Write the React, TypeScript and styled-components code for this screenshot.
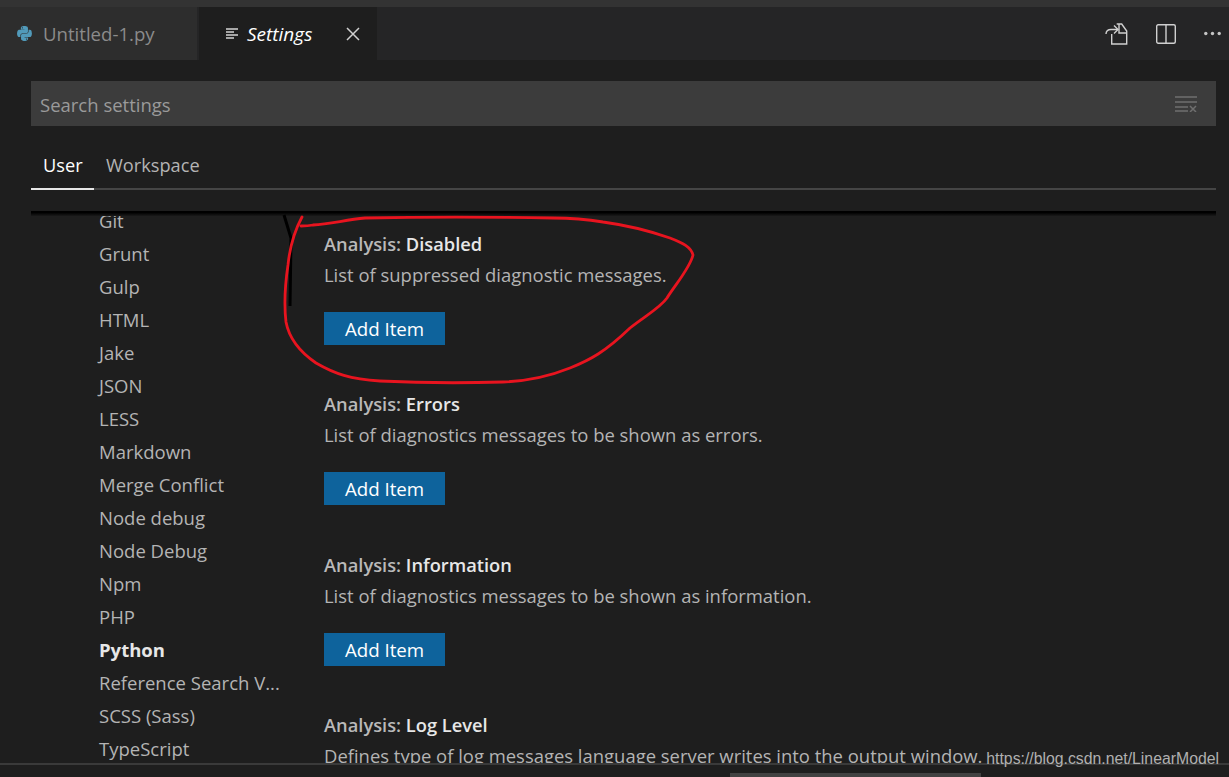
import styled, { createGlobalStyle } from "styled-components"
import { FaPython } from "react-icons/fa"

const Global = createGlobalStyle`
  html, body { margin: 0; padding: 0; background: #1e1e1e; }
  body { font-family: "Open Sans", "Noto Sans", sans-serif; }
`

const Window = styled.div`
  position: relative;
  width: 1229px;
  height: 777px;
  overflow: hidden;
  display: flex;
  flex-direction: column;
  background: #1e1e1e;
`
const TitleStrip = styled.div`
  height: 7px;
  background: #333333;
`
const TabBar = styled.div`
  height: 53px;
  display: flex;
  background: #252526;
`
const FileTab = styled.div<{ $active?: boolean }>`
  display: flex;
  align-items: center;
  height: 100%;
  background: ${(p) => (p.$active ? "#1e1e1e" : "#2d2d2d")};
  width: ${(p) => (p.$active ? "178px" : "197px")};
  margin-right: ${(p) => (p.$active ? "0" : "2px")};
  padding-left: ${(p) => (p.$active ? "26px" : "16px")};
  box-sizing: border-box;
  flex: none;
`
const TabLabel = styled.span<{ $active?: boolean }>`
  font-size: ${(p) => (p.$active ? "19px" : "18.6px")};
  margin-left: ${(p) => (p.$active ? "8px" : "10px")};
  color: ${(p) => (p.$active ? "#ffffff" : "#8b8b8b")};
  font-style: ${(p) => (p.$active ? "italic" : "normal")};
  width: ${(p) => (p.$active ? "99px" : "auto")};
`
const Actions = styled.div`
  margin-left: auto;
  display: flex;
  align-items: center;
  gap: 28px;
  padding: 0 8px 0 0;
`
const Search = styled.div`
  margin: 21px 13px 0 31px;
  height: 45px;
  display: flex;
  align-items: center;
  justify-content: space-between;
  padding: 0 18px 0 9px;
  background: #3c3c3c;
  color: #9a9a9a;
  font-size: 18.5px;
`
const SearchText = styled.span`
  position: relative;
  top: 1px;
`
const Tabs = styled.div`
  margin: 19px 13px 0 31px;
  height: 43px;
  display: flex;
  border-bottom: 2px solid #454545;
`
const ScopeTab = styled.div<{ $active?: boolean }>`
  padding: 0 11.5px 0 12px;
  height: 45px;
  box-sizing: border-box;
  line-height: 40px;
  font-size: 18.2px;
  color: ${(p) => (p.$active ? "#ffffff" : "#b4b4b4")};
  border-bottom: 2px solid ${(p) => (p.$active ? "#e7e7e7" : "transparent")};
`
const Body = styled.div`
  position: relative;
  flex: none;
  height: 552px;
  margin: 21px 13px 0 31px;
  display: flex;
  overflow: hidden;
`
const ScrollShadow = styled.div`
  position: absolute;
  inset: 0 0 auto 0;
  height: 5px;
  background: linear-gradient(#000 30%, #1a1a1a);
`
const Toc = styled.div`
  width: 293px;
  flex: none;
  margin-top: -7px;
  padding-left: 68px;
  box-sizing: border-box;
`
const TocItem = styled.div<{ $bold?: boolean }>`
  height: 33px;
  line-height: 33px;
  white-space: nowrap;
  font-size: 18.5px;
  font-weight: ${(p) => (p.$bold ? 700 : 400)};
  color: ${(p) => (p.$bold ? "#e7e7e7" : "#b4b4b4")};
`
const Settings = styled.div`
  flex: 1;
  padding-top: 15.75px;
`
const Setting = styled.div`
  height: 160.5px;
`
const Heading = styled.div`
  height: 32px;
  line-height: 33px;
  font-size: 18.3px;
  font-weight: 600;
  color: #b9b9b9;
  b { color: #e7e7e7; font-weight: 600; }
`
const Description = styled.div`
  height: 32px;
  line-height: 32px;
  font-size: 18.45px;
  white-space: nowrap;
  color: #b4b4b4;
`
const AddButton = styled.div`
  margin-top: 21px;
  width: 121px;
  height: 33px;
  line-height: 33px;
  text-align: center;
  font-size: 18.7px;
  color: #ffffff;
  background: #0e639c;
`
const Footer = styled.div`
  flex: 1;
  border-top: 2px solid #3a3a3a;
  display: flex;
  align-items: flex-end;
`
const ScrollThumb = styled.div`
  margin-left: 730px;
  width: 251px;
  height: 4px;
  background: #424242;
`
const Watermark = styled.div`
  position: absolute;
  right: 10px;
  bottom: 8px;
  font-family: "Liberation Sans", Arial, sans-serif;
  font-size: 15.8px;
  color: #b0b0b0;
  line-height: 20px;
`
const Annotation = styled.svg`
  position: absolute;
  left: 0;
  top: 0;
  pointer-events: none;
`

const toc = ["Git", "Grunt", "Gulp", "HTML", "Jake", "JSON", "LESS", "Markdown", "Merge Conflict", "Node debug", "Node Debug", "Npm", "PHP", "Python", "Reference Search V...", "SCSS (Sass)", "TypeScript"]

const settings = [
  ["Disabled", "List of suppressed diagnostic messages."],
  ["Errors", "List of diagnostics messages to be shown as errors."],
  ["Information", "List of diagnostics messages to be shown as information."],
]

function SettingsGlyph() {
  return (
    <svg width="14" height="14" viewBox="0 0 14 14" stroke="#d4d4d4" strokeWidth="1.3">
      <path d="M1 2h12M1 5h8M1 8h12M1 11h8" />
    </svg>
  )
}

export default function App() {
  return (
    <Window>
      <Global />
      <TitleStrip />
      <TabBar>
        <FileTab>
          <FaPython size={17} color="#519aba" />
          <TabLabel>Untitled-1.py</TabLabel>
        </FileTab>
        <FileTab $active>
          <SettingsGlyph />
          <TabLabel $active>Settings</TabLabel>
          <svg width="14" height="14" viewBox="0 0 14 14" stroke="#d0d0d0" strokeWidth="1.5">
            <path d="M1 1l12 12M13 1L1 13" />
          </svg>
        </FileTab>
        <Actions>
          <svg width="23" height="22" viewBox="0 0 23 22" fill="none" stroke="#d0d0d0" strokeWidth="1.4">
            <path d="M6.7 11v10h15V8l-5-7h-5" />
            <path d="M14 1v9h7.7" />
            <path d="M1 11c0-3 2-4.5 5-4.5h6.5" />
            <path d="M9 2.5l4 4-4 4" />
          </svg>
          <svg width="20" height="20" viewBox="0 0 20 20" fill="none" stroke="#d0d0d0" strokeWidth="1.4">
            <rect x="0.7" y="0.7" width="18.6" height="18.6" rx="1.5" />
            <path d="M10 1v18" />
          </svg>
          <svg width="17" height="5" viewBox="0 0 17 5" fill="#c5c5c5">
            <circle cx="1.8" cy="2.5" r="1.7" />
            <circle cx="8.5" cy="2.5" r="1.7" />
            <circle cx="15.2" cy="2.5" r="1.7" />
          </svg>
        </Actions>
      </TabBar>
      <Search>
        <SearchText>Search settings</SearchText>
        <svg width="23" height="16" viewBox="0 0 23 16" stroke="#6f6f6f" strokeWidth="1.5">
          <path d="M0 1h22M0 6h22M0 11h13M0 15h13M15 10l6 6M21 10l-6 6" />
        </svg>
      </Search>
      <Tabs>
        <ScopeTab $active>User</ScopeTab>
        <ScopeTab>Workspace</ScopeTab>
      </Tabs>
      <Body>
        <Toc>
          {toc.map((t) => (
            <TocItem key={t} $bold={t === "Python"}>{t}</TocItem>
          ))}
        </Toc>
        <Settings>
          {settings.map(([name, text]) => (
            <Setting key={name}>
              <Heading>Analysis: <b>{name}</b></Heading>
              <Description>{text}</Description>
              <AddButton>Add Item</AddButton>
            </Setting>
          ))}
          <Setting>
            <Heading>Analysis: <b>Log Level</b></Heading>
            <Description>Defines type of log messages language server writes into the output window.</Description>
          </Setting>
        </Settings>
        <ScrollShadow />
      </Body>
      <Footer>
        <ScrollThumb />
      </Footer>
      <Watermark>https://blog.csdn.net/LinearModel</Watermark>
      <Annotation width="1229" height="777" viewBox="0 0 1229 777" fill="none">
        <path d="M284 215L291 238L290 306" stroke="#000" strokeWidth="3" />
        <path
          d="M302 217C295 230 290 245 288 265C285 285 284 305 286 322C289 338 300 352 316 363C335 374 350 379 380 381C420 383 470 383 503 382C530 381 550 376 570 368C590 360 605 352 630 328C645 316 660 308 667 298C675 285 690 268 693 255C691 247 683 243 670 238C650 231 625 225 603 222C585 219 570 218 553 218C490 217 420 217 365 218C345 220 330 224 313 225C308 226 304 226 301 226"
          stroke="#e8141f"
          strokeWidth="2.8"
          strokeLinecap="round"
        />
      </Annotation>
    </Window>
  )
}
